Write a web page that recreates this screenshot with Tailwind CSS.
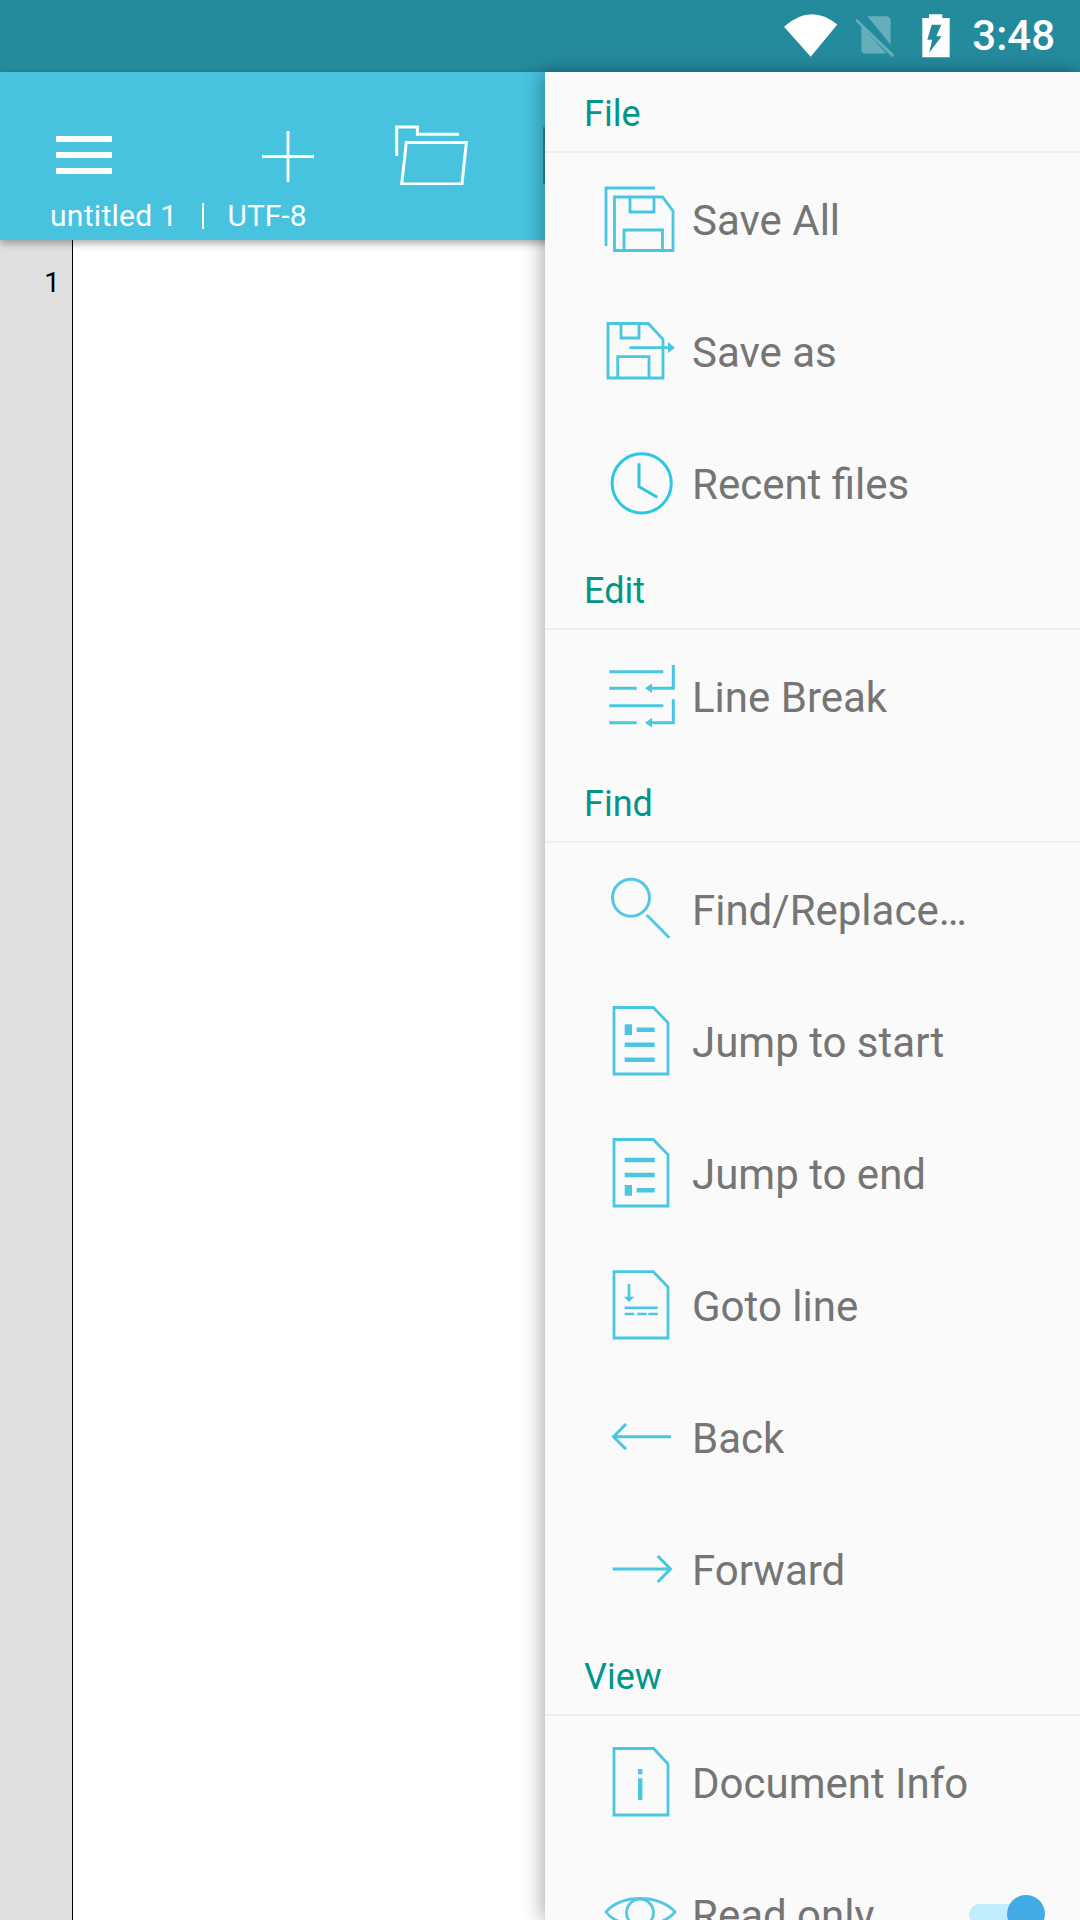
<!DOCTYPE html>
<html>
<head>
<meta charset="utf-8">
<script src="https://cdn.jsdelivr.net/npm/@tailwindcss/browser@4"></script>
</head>
<body class="m-0">
<div class="relative w-[1080px] h-[1920px] overflow-hidden bg-white font-['Roboto',sans-serif]">
  <!-- status bar -->
  <div class="h-[72px] bg-[#248B9D] flex items-center justify-end pr-[25px]">
    <svg class="w-[54px] h-[44px] block" viewBox="785 14 54 44"><path d="M811.7 56.7 L785 26.7 Q811.7 3 838.3 24.5 Z" fill="#fff"/></svg>
    <svg class="w-[40px] h-[44px] ml-[18px] block" viewBox="857 14 40 44"><g opacity="0.3" fill="#fff"><path d="M868.4 16.3 H887 Q891.7 16.3 891.7 21 V44.7 Z"/><path d="M862.3 26 L887.5 53.5 H866 Q862.3 53.5 862.3 50 Z"/><path d="M856.5 18.3 L859 20 L895.5 55 L893.5 57.5 L857.5 22 Z"/></g></svg>
    <svg class="w-[28px] h-[44px] ml-[26px] block" viewBox="923 14 28 44"><path d="M930 14.3 H943.3 V18 H950.7 V57.3 H923.3 V18 H930 Z" fill="#fff"/><path d="M932.7 24.7 H942.3 L937.3 36.3 H942.7 L930 53 L933.3 39.7 H928.3 Z" fill="#248B9D"/></svg>
    <div class="ml-[22px] text-[42px] leading-none font-medium text-white">3:48</div>
  </div>

  <!-- toolbar -->
  <div class="relative z-10 h-[168px] bg-[#47C3DF] shadow-[0_3px_8px_rgba(0,0,0,0.35)] pt-[53px]">
    <div class="h-[60px] flex items-center pl-[56px]">
      <svg class="w-[56px] h-[38px] block" viewBox="0 0 56 38"><path d="M0 0 H56 V6 H0 Z M0 16 H56 V22 H0 Z M0 32 H56 V38 H0 Z" fill="#fff"/></svg>
      <svg class="w-[52px] h-[60px] ml-[150px] block" viewBox="262 125 52 60" fill="none" stroke="#fff" stroke-width="2.8"><path d="M288 131 V182 M262 156.5 H314"/></svg>
      <svg class="w-[75px] h-[60px] ml-[80px] block" viewBox="394 125 75 60" fill="none" stroke="#fff" stroke-width="3"><path d="M396.7 156 V127 H417.4 V134.3 H459"/><path d="M406.3 142.5 H466.3 L462 184 H401.7 Z"/></svg>
    </div>
    <div class="flex items-center h-[55px] pt-[6px] pl-[50px] text-[30px] leading-none text-white">
      <span class="tracking-[0.3px]">untitled 1</span>
      <span class="w-[2px] h-[26px] bg-white ml-[25px]"></span>
      <span class="ml-[23px]">UTF-8</span>
    </div>
    <div class="absolute left-[543px] top-[55px] w-[2px] h-[57px] bg-[#2A8FA5]"></div>
  </div>

  <!-- editor -->
  <div class="flex h-[1680px]">
    <div class="w-[73px] bg-[#E0E0E0] border-r border-black pt-[23px] pr-[12px] text-right text-[28px] leading-[40px] text-black">1</div>
    <div class="flex-1 bg-white"></div>
  </div>

  <!-- drawer -->
  <div class="absolute z-20 left-[545px] top-[72px] w-[535px] h-[1848px] bg-[#FAFAFA] shadow-[-4px_0_18px_rgba(0,0,0,0.3)] text-[42px] leading-none text-[#757575]">

    <div class="h-[81px] border-b-2 border-[#EEEEEE] flex items-center pl-[39px] pt-[4px] text-[36px] text-[#009688]">File</div>

    <div class="h-[132px] flex items-center pl-[55px]">
      <svg class="w-[90px] h-[90px] block" viewBox="0 -1 90 90" fill="none" stroke="#48C6E2" stroke-width="2.8"><path d="M6 71 V13 H55"/><path d="M14.5 22 H62.5 L73 36 V75.5 H14.5 Z"/><path d="M30 22 V37 H54 V22"/><path d="M24 75.5 V55 H62.5 V75.5"/></svg>
      <span class="ml-[2px] pt-[3px]">Save All</span>
    </div>
    <div class="h-[132px] flex items-center pl-[55px]">
      <svg class="w-[90px] h-[90px] block" viewBox="0 -1 90 90" fill="none" stroke="#48C6E2" stroke-width="2.8"><path d="M8 16.5 H48.3 L63 32.3 V71 H8 Z"/><path d="M21 16.5 V31 H39 V16.5"/><path d="M29.3 40.7 H68"/><path d="M68 35 L75 40.7 L68 46 Z" fill="#48C6E2" stroke="none"/><path d="M17.7 71 V49.7 H49 V71"/></svg>
      <span class="ml-[2px] pt-[3px]">Save as</span>
    </div>
    <div class="h-[132px] flex items-center pl-[55px]">
      <svg class="w-[90px] h-[90px] block" viewBox="0 -1 90 90" fill="none" stroke="#2CC6E0" stroke-width="3"><circle cx="41.7" cy="44.3" r="29.6"/><path d="M39 24.3 V47.7 L57.3 58.3"/></svg>
      <span class="ml-[2px] pt-[3px]">Recent files</span>
    </div>

    <div class="h-[81px] border-b-2 border-[#EEEEEE] flex items-center pl-[39px] pt-[4px] text-[36px] text-[#009688]">Edit</div>

    <div class="h-[132px] flex items-center pl-[55px]">
      <svg class="w-[90px] h-[90px] block" viewBox="0 -1 90 90" fill="none" stroke="#48C6E2" stroke-width="3"><path d="M9.3 19.7 H63.3 M9.3 36.3 H36.7 M73.3 13 V36.3 H50 M9.3 53.7 H63.3 M9.3 70.7 H36.7 M73.3 47.3 V70.7 H50"/><path d="M45 36.3 L52 31.5 V41 Z M45 70.7 L52 66 V75.5 Z" fill="#48C6E2" stroke="none"/></svg>
      <span class="ml-[2px] pt-[3px]">Line Break</span>
    </div>

    <div class="h-[81px] border-b-2 border-[#EEEEEE] flex items-center pl-[39px] pt-[4px] text-[36px] text-[#009688]">Find</div>

    <div class="h-[132px] flex items-center pl-[55px]">
      <svg class="w-[90px] h-[90px] block" viewBox="0 -1 90 90" fill="none" stroke="#54C8E2" stroke-width="3"><circle cx="31" cy="32.7" r="18.5"/><path d="M46.7 50 L69.3 72.7"/></svg>
      <span class="ml-[2px] pt-[3px]">Find/Replace…</span>
    </div>
    <div class="h-[132px] flex items-center pl-[55px]">
      <svg class="w-[90px] h-[90px] block" viewBox="0 -1 90 90" fill="none" stroke="#48C6E2" stroke-width="2.8"><path d="M14 10.5 H53.3 L68 25.7 V77 H14 Z"/><path d="M24.7 27.3 H32 V38 H24.7 Z" fill="#48C6E2" stroke="none"/><path d="M36.7 32.7 H54.7 M24.7 47.7 H54.7 M24.7 62.7 H54.7" stroke-width="4.4"/></svg>
      <span class="ml-[2px] pt-[3px]">Jump to start</span>
    </div>
    <div class="h-[132px] flex items-center pl-[55px]">
      <svg class="w-[90px] h-[90px] block" viewBox="0 -1 90 90" fill="none" stroke="#48C6E2" stroke-width="2.8"><path d="M14 10.5 H53.3 L68 25.7 V77 H14 Z"/><path d="M24.7 56 H32 V66.7 H24.7 Z" fill="#48C6E2" stroke="none"/><path d="M24.7 31 H54.7 M24.7 46 H54.7 M36.7 61.3 H54.7" stroke-width="4.4"/></svg>
      <span class="ml-[2px] pt-[3px]">Jump to end</span>
    </div>
    <div class="h-[132px] flex items-center pl-[55px]">
      <svg class="w-[90px] h-[90px] block" viewBox="0 -1 90 90" fill="none" stroke="#48C6E2" stroke-width="2.8"><path d="M14 10.7 H53.3 L68 26 V77 H14 Z"/><path d="M29 23 V37" stroke-width="2.6"/><path d="M24 35.7 H34.3 L29 41 Z" fill="#48C6E2" stroke="none"/><path d="M24.7 46.7 H57.7" stroke-width="2.6"/><path d="M24.7 53 H34.3 M37.3 53 H46.7 M48.3 53 H57.7" stroke-width="2.6"/></svg>
      <span class="ml-[2px] pt-[3px]">Goto line</span>
    </div>
    <div class="h-[132px] flex items-center pl-[55px]">
      <svg class="w-[90px] h-[90px] block" viewBox="0 -1 90 90" fill="none" stroke="#48C6E2" stroke-width="3"><path d="M12.7 43.7 H71 M26 31 L13.5 43.7 L26 56.3"/></svg>
      <span class="ml-[2px] pt-[3px]">Back</span>
    </div>
    <div class="h-[132px] flex items-center pl-[55px]">
      <svg class="w-[90px] h-[90px] block" viewBox="0 -1 90 90" fill="none" stroke="#48C6E2" stroke-width="3"><path d="M12.7 44 H70.5 M57.7 31 L70.5 44 L57.7 57"/></svg>
      <span class="ml-[2px] pt-[3px]">Forward</span>
    </div>

    <div class="h-[81px] border-b-2 border-[#EEEEEE] flex items-center pl-[39px] pt-[4px] text-[36px] text-[#009688]">View</div>

    <div class="h-[132px] flex items-center pl-[55px]">
      <svg class="w-[90px] h-[90px] block" viewBox="0 -1 90 90" fill="none" stroke="#48C6E2" stroke-width="2.8"><path d="M14 10.5 H53.6 L68 26 V77 H14 Z"/><path d="M38 31 H42.4 V36.3 H38 Z M38 40.3 H42.4 V62 H38 Z" fill="#48C6E2" stroke="none"/></svg>
      <span class="ml-[2px] pt-[3px]">Document Info</span>
    </div>
    <div class="h-[132px] flex items-center pl-[55px]">
      <svg class="w-[90px] h-[90px] block" viewBox="0 -1 90 90" fill="none" stroke="#54C8E2" stroke-width="2.8"><path d="M6 42 C20 24 60 24 75 42 C60 60 20 60 6 42 Z"/><circle cx="40" cy="42.7" r="13.5"/></svg>
      <span class="ml-[2px] pt-[3px]">Read only</span>
      <div class="relative ml-auto mr-[40px] w-[71px] h-[21px] rounded-full bg-[#C1EDFF]">
        <div class="absolute right-[-5px] top-[-9px] w-[38px] h-[38px] rounded-full bg-[#42ABE6]"></div>
      </div>
    </div>
  </div>
</div>
</body>
</html>
